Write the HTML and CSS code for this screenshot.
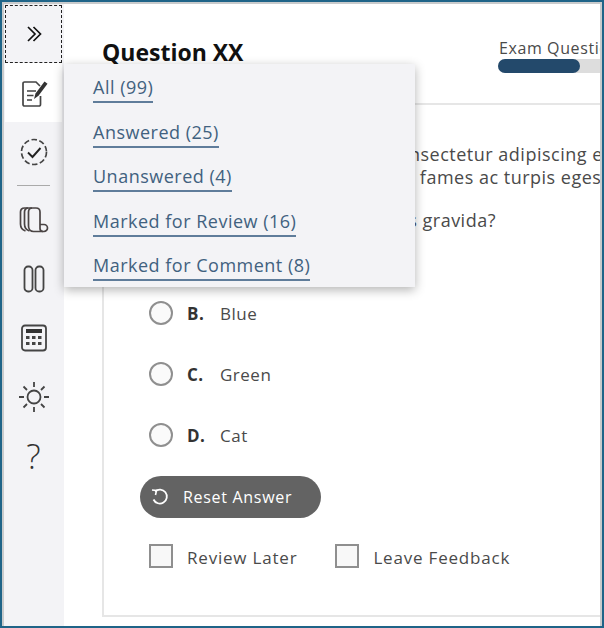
FILE: index.html
```html
<!DOCTYPE html>
<html lang="en">
<head>
<meta charset="UTF-8" />
<title>Exam question</title>
<link rel="stylesheet" href="styles.css">
</head>
<body>

<div class="frame">
  <nav class="sidebar">
    <div class="tool toggle">
      <svg width="18" height="18" viewBox="0 0 18 18" fill="none" stroke="#111" stroke-width="1.7"><path d="M3 2l7 7-7 7M8.500 2l7 7-7 7"/></svg>
    </div>
    <div class="tool active">
      <svg width="30" height="30" viewBox="0 0 30 30" fill="none" stroke="#444" stroke-width="1.700">
        <path d="M21.500 18v8.500a1.500 1.500 0 0 1-1.500 1.500H5.500A1.500 1.500 0 0 1 4 26.500V5.500A1.500 1.500 0 0 1 5.500 4H17l4 4"/>
        <path d="M8 13h9M8 17.500h6.500M8 22h5"/>
        <path d="M15 21l1.500-5.500L25.500 3.500l3 2.300-9 12z" fill="#333" stroke="none"/>
      </svg>
    </div>
    <div class="tool">
      <svg width="30" height="30" viewBox="0 0 30 30" fill="none" stroke="#444" stroke-width="1.700">
        <circle cx="15" cy="15" r="12.500" stroke-dasharray="5.500 2.500"/>
        <path d="M9 15.500l4.500 4.500 8-9" stroke="#222" stroke-width="1.900"/>
      </svg>
    </div>
    <div class="divider"></div>
    <div class="tool">
      <svg width="30" height="28" viewBox="0 0 30 28" fill="none" stroke="#4a4444" stroke-width="1.700">
        <path d="M9 2H5.500C3 2 1.500 3.500 1.500 6v12c0 3 2 6 5 7"/>
        <path d="M13 2H9.500C7 2 5.500 3.500 5.500 6v12c0 3 2 6 5 7"/>
        <path d="M17 2h-3.500C11 2 9.500 3.500 9.500 6v14c0 3 2 5.500 5 5.500H25a3.500 3.500 0 0 0 0-7h-4"/>
        <path d="M17 2c2.500 0 4 1.500 4 4v16.500a3 3 0 0 0 3 3"/>
      </svg>
    </div>
    <div class="tool">
      <svg width="22" height="28" viewBox="0 0 22 28" fill="none" stroke="#444" stroke-width="1.800">
        <rect x="1.500" y="1.500" width="8" height="25" rx="3.500"/>
        <rect x="12.500" y="1.500" width="8" height="25" rx="3.500"/>
      </svg>
    </div>
    <div class="tool">
      <svg width="26" height="28" viewBox="0 0 26 28" fill="none" stroke="#444" stroke-width="1.800">
        <rect x="1" y="1.500" width="24" height="25" rx="3"/>
        <rect x="5" y="5" width="16" height="4" fill="#333" stroke="none"/>
        <g fill="#444" stroke="none">
          <rect x="5" y="12" width="3.500" height="3"/><rect x="11" y="12" width="3.500" height="3"/><rect x="17" y="12" width="3.500" height="3"/>
          <rect x="5" y="18" width="3.500" height="3"/><rect x="11" y="18" width="3.500" height="3"/><rect x="17" y="18" width="3.500" height="3"/>
        </g>
      </svg>
    </div>
    <div class="tool">
      <svg width="32" height="32" viewBox="0 0 32 32" fill="none" stroke="#444" stroke-width="1.800">
        <circle cx="16" cy="16" r="6.500"/>
        <path d="M16 1v5M16 26v5M1 16h5M26 16h5M5.500 5.500l3.500 3.500M23 23l3.500 3.500M5.500 26.500L9 23M23 9l3.500-3.500"/>
      </svg>
    </div>
    <div class="tool help">?</div>
  </nav>

  <main class="main">
    <header class="exam-head">
      <h1>Question XX</h1>
      <div class="progress">
        <div class="progress-label">Exam Questions</div>
        <div class="track"><div class="fill" style="width: 82px"></div></div>
      </div>
    </header>

    <section class="question">
      <p class="stem">Lorem ipsum dolor sit amet, consectetur adipiscing elit, sed do</p>
      <p class="stem">Senectus et netus et malesuada fames ac turpis egestas</p>
      <p class="stem ask">Nullam risus mollis ornare lacus gravida?</p>

      <div class="options">
        <label class="option"><span class="radio"></span><b>A.</b>Red</label>
        <label class="option"><span class="radio"></span><b>B.</b>Blue</label>
        <label class="option"><span class="radio"></span><b>C.</b>Green</label>
        <label class="option"><span class="radio"></span><b>D.</b>Cat</label>
      </div>

      <button class="reset">
        <svg width="20" height="20" viewBox="0 0 20 20" fill="none" stroke="#fff" stroke-width="1.800"><path d="M5 4.500A7 7 0 1 1 3.500 12.500"/><path d="M2 3l4.500.5L5.500 8" stroke-width="1.600"/></svg>
        Reset Answer
      </button>

      <div class="marks">
        <label class="mark"><span class="box"></span>Review Later</label>
        <label class="mark"><span class="box"></span>Leave Feedback</label>
      </div>
    </section>
  </main>

  <div class="filter-menu">
    <a href="#">All (99)</a>
    <a href="#">Answered (25)</a>
    <a href="#">Unanswered (4)</a>
    <a href="#">Marked for Review (16)</a>
    <a href="#">Marked for Comment (8)</a>
  </div>
</div>

</body>
</html>
```

FILE: styles.css
```css
* {
  box-sizing: border-box;
}
body {
  margin: 0;
  background: #fff;
  color: #4a4a4a;
  font-family: "Open Sans", "Noto Sans", sans-serif;
}
.frame {
  position: relative;
  display: flex;
  width: 604px;
  height: 628px;
  overflow: hidden;
  background: #fff;
  border: 2px solid #1f6488;
  box-shadow: inset 2px 2px 0 #c9cbcc, inset -2px 0 0 #c9cbcc;
}

/* left tool rail */
.sidebar {
  flex: 0 0 60px;
  margin: 2px 0 0 2px;
  padding: 1px 2px 0 1px;
  background: #f3f3f6;
}
.tool {
  display: flex;
  align-items: center;
  justify-content: center;
  height: 59px;
}
.tool.toggle {
  height: 58px;
  border: 1px dashed #222;
}
.tool.active {
  background: #fff;
}
.tool.help {
  font-size: 34px;
  font-weight: 300;
  color: #333;
}
.divider {
  height: 1px;
  margin: 4px 12px;
  background: #aaa;
}

/* main column */
.main {
  flex: 1;
  min-width: 0;
  margin: 2px 2px 0 0;
  padding-left: 38px;
  display: flex;
  flex-direction: column;
  overflow: hidden;
}
.exam-head {
  display: flex;
  flex: 0 0 101px;
  width: 700px;
  border-bottom: 2px solid #e6e6e6;
}
.exam-head h1 {
  flex: 0 0 396px;
  margin: 33px 0 0;
  font-size: 23px;
  line-height: 30px;
  color: #111;
}
.progress {
  margin-top: 34px;
  width: 240px;
}
.progress-label {
  font-size: 16px;
  line-height: 20px;
  letter-spacing: 0.6px;
  margin-left: 1px;
}
.track {
  height: 14px;
  margin-top: 1px;
  background: #ddd;
  border-radius: 7px;
}
.fill {
  height: 14px;
  background: #23496b;
  border-radius: 7px;
}

.question {
  flex: 1;
  width: 700px;
  margin-bottom: 9px;
  padding: 38px 0 0 18px;
  border-left: 2px solid #e6e6e6;
  border-bottom: 2px solid #e6e6e6;
}
.stem {
  margin: 0 0 0 11px;
  font-size: 18px;
  line-height: 23px;
  letter-spacing: 0.5px;
  white-space: nowrap;
}
.stem.ask {
  margin-top: 20px;
}
.options {
  display: flex;
  flex-direction: column;
  gap: 31px;
  margin-top: 5px;
  padding-left: 27px;
}
.option {
  display: flex;
  align-items: center;
  height: 30px;
  font-size: 17px;
  letter-spacing: 0.5px;
}
.option b {
  width: 33px;
  margin-left: 14px;
  color: #333;
}
.radio {
  width: 24px;
  height: 24px;
  background: #fafafa;
  border: 2px solid #8f8f8f;
  border-radius: 50%;
}
.reset {
  display: flex;
  align-items: center;
  gap: 13px;
  width: 181px;
  height: 42px;
  margin: 26px 0 0 18px;
  padding: 0 0 0 10px;
  background: #636363;
  border: none;
  border-radius: 21px;
  color: #fff;
  font: inherit;
  font-size: 16px;
  letter-spacing: 0.7px;
}
.marks {
  display: flex;
  gap: 38px;
  margin: 28px 0 0 27px;
}
.mark {
  display: flex;
  align-items: center;
  gap: 14px;
  font-size: 17px;
  letter-spacing: 0.8px;
}
.box {
  width: 24px;
  height: 24px;
  margin-top: -3px;
  background: #f8f8f8;
  border: 2px solid #8f8f8f;
}

/* filter flyout over the page */
.filter-menu {
  position: absolute;
  left: 62px;
  top: 62px;
  width: 351px;
  height: 223px;
  padding: 10px 0 0 29px;
  background: #f3f3f6;
  box-shadow: 0 3px 10px rgba(0, 0, 0, 0.3);
  display: flex;
  flex-direction: column;
  align-items: flex-start;
  gap: 15.5px;
}
.filter-menu a {
  color: #41617f;
  font-size: 18px;
  line-height: 27px;
  letter-spacing: 0.5px;
  text-decoration: none;
  border-bottom: 2px solid #5f7c9a;
}
```
